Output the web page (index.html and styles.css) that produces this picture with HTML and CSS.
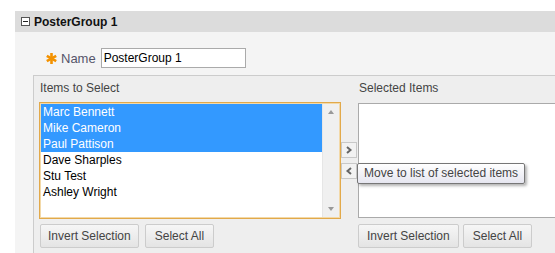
FILE: index.html
```html
<!DOCTYPE html>
<html lang="en-US">
<head>
    <meta charset="UTF-8">
    <meta name="viewport" content="width=device-width, initial-scale=1.0">
    <title>PosterGroup 1</title>
    <link rel="stylesheet" href="styles.css">
</head>
<body>
    <div class="group">
        <div class="group-head">
            <span class="toggle"></span>
            <h2>PosterGroup 1</h2>
        </div>
        <div class="group-body">
            <div class="name-row">
                <svg class="req" width="11" height="11" viewBox="0 0 11 11">
                    <g stroke="#f39200" stroke-width="2.6" stroke-linecap="butt">
                        <line x1="5.5" y1="0" x2="5.5" y2="11"/>
                        <line x1="0.8" y1="2.8" x2="10.2" y2="8.2"/>
                        <line x1="0.8" y1="8.2" x2="10.2" y2="2.8"/>
                    </g>
                </svg>
                <label for="groupName">Name</label>
                <input type="text" id="groupName" value="PosterGroup 1">
            </div>
            <div class="picker">
                <div class="pick-label">Items to Select</div>
                <div></div>
                <div class="pick-label">Selected Items</div>

                <div class="list list-source">
                    <ul class="options">
                        <li class="on">Marc Bennett</li>
                        <li class="on">Mike Cameron</li>
                        <li class="on">Paul Pattison</li>
                        <li>Dave Sharples</li>
                        <li>Stu Test</li>
                        <li>Ashley Wright</li>
                    </ul>
                    <div class="scroll">
                        <span class="arr up"></span>
                        <span class="arr down"></span>
                    </div>
                </div>
                <div class="mover">
                    <button class="move">
                        <svg width="8" height="8" viewBox="0 0 8 8"><path d="M2 1 L5.5 4 L2 7" fill="none" stroke="#666" stroke-width="2"/></svg>
                    </button>
                    <button class="move">
                        <svg width="8" height="8" viewBox="0 0 8 8"><path d="M6 1 L2.5 4 L6 7" fill="none" stroke="#666" stroke-width="2"/></svg>
                    </button>
                    <div class="tip">Move to list of selected items</div>
                </div>
                <div class="list list-target"></div>

                <div class="btns">
                    <button>Invert Selection</button>
                    <button class="all">Select All</button>
                </div>
                <div></div>
                <div class="btns btns-right">
                    <button class="wide">Invert Selection</button>
                    <button class="all">Select All</button>
                </div>
            </div>
        </div>
    </div>
</body>
</html>
```

FILE: styles.css
```css
body {
    margin: 0;
    background-color: #fff;
    font-family: "Liberation Sans", Arial, sans-serif;
    overflow: hidden;
    height: 253px;
}

.group {
    margin: 11px 0 0 15px;
    width: 540px;
}
.group-head {
    height: 21px;
    background-color: #dcdcdc;
    display: flex;
    align-items: center;
    padding-left: 6px;
}
.toggle {
    width: 7px;
    height: 7px;
    border: 1px solid #555;
    background-color: #fff;
    position: relative;
    margin-right: 4px;
}
.toggle::after {
    content: "";
    position: absolute;
    left: 1px;
    right: 1px;
    top: 3px;
    height: 1px;
    background-color: #222;
}
.group-head h2 {
    margin: 0;
    font-size: 12px;
    font-weight: bold;
    color: #111;
}

.group-body {
    background-color: #f4f4f4;
    padding-top: 16px;
}
.name-row {
    display: flex;
    align-items: center;
    padding-left: 31px;
    height: 20px;
}
.req {
    margin-top: 0;
    margin-right: 4px;
}
.name-row label {
    font-size: 13px;
    color: #55556a;
    margin-right: 5px;
}
.name-row input {
    width: 139px;
    height: 16px;
    border: 1px solid #aaa;
    padding: 1px 2px;
    font-family: inherit;
    font-size: 12px;
    color: #000;
    margin: 0;
}

.picker {
    margin: 7px 0 0 18px;
    background-color: #eee;
    border-top: 1px solid #ccc;
    border-left: 1px solid #ccc;
    padding: 5px 0 10px 5px;
    display: grid;
    grid-template-columns: 302px 17px 1fr;
}
.pick-label {
    font-size: 12px;
    color: #444;
    line-height: 14px;
    padding-left: 1px;
    margin-bottom: 7px;
}

.list {
    height: 117px;
    box-sizing: border-box;
    background-color: #fff;
}
.list-source {
    border: 1px solid #e2a94a;
    box-shadow: inset 0 0 0 1px #f3d9a8;
    display: flex;
    padding: 1px;
}
.list-target {
    border: 1px solid #aaa;
    border-right: none;
    margin-top: 1px;
    height: 115px;
}
.options {
    list-style: none;
    margin: 0;
    padding: 0;
    flex: 1;
}
.options li {
    height: 16px;
    line-height: 16px;
    font-size: 12px;
    color: #000;
    padding-left: 2px;
}
.options li.on {
    background-color: #3399ff;
    color: #fff;
}
.scroll {
    width: 16px;
    background-color: #f0f0f0;
    border-left: 1px solid #e6e6e6;
    display: flex;
    flex-direction: column;
    justify-content: space-between;
    align-items: center;
    padding: 6px 0;
}
.arr {
    width: 0;
    height: 0;
    border-left: 3px solid transparent;
    border-right: 3px solid transparent;
}
.arr.up {
    border-bottom: 4px solid #999;
}
.arr.down {
    border-top: 4px solid #999;
}

.mover {
    position: relative;
    display: flex;
    flex-direction: column;
    justify-content: center;
    gap: 5px;
}
.move {
    width: 16px;
    height: 16px;
    padding: 0;
    border: 1px solid #c8c8c8;
    background-color: #f2f2f2;
    display: flex;
    align-items: center;
    justify-content: center;
}
.tip {
    position: absolute;
    left: 16px;
    top: 61px;
    white-space: nowrap;
    font-size: 12px;
    color: #444;
    padding: 2px 6px;
    height: 15px;
    line-height: 15px;
    border: 1px solid #777;
    border-radius: 2px;
    background: linear-gradient(#ffffff, #e6e6f0);
    box-shadow: 2px 2px 3px rgba(0, 0, 0, 0.3);
}

.btns {
    display: flex;
    gap: 6px;
    margin-top: 5px;
    padding-left: 1px;
}
.btns-right {
    gap: 4px;
    padding-left: 0;
}
.btns button {
    height: 24px;
    padding: 0 7px;
    border: 1px solid #ccc;
    border-radius: 2px;
    background: linear-gradient(#f6f6f6, #e4e4e4);
    font-family: inherit;
    font-size: 12px;
    color: #444;
}
.btns button.wide {
    padding: 0 8px;
}
.btns button.all {
    padding: 0 9px;
}
```
